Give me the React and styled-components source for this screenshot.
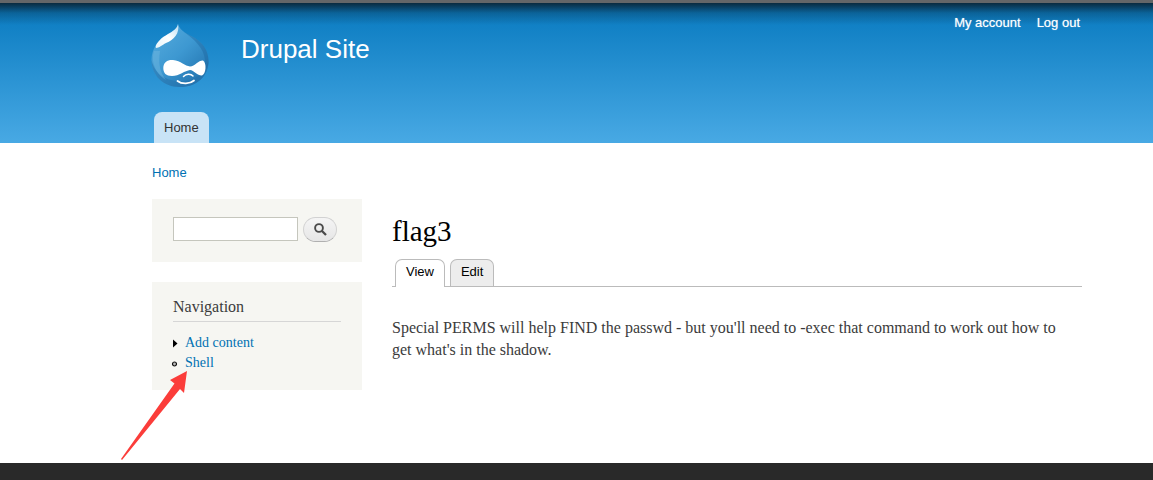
import React from 'react';
import styled, { createGlobalStyle } from 'styled-components';

const sans = '"Liberation Sans", Arial, sans-serif';
const serif = 'Georgia, "Liberation Serif", serif';

const GlobalStyle = createGlobalStyle`
  * { box-sizing: border-box; }
  body {
    margin: 0;
    background: #fff;
    color: #3b3b3b;
    font-family: ${serif};
  }
  a { color: #0071b3; text-decoration: none; }
  h1, h2, p, ul { margin: 0; padding: 0; font-weight: normal; }
`;

const Page = styled.div`
  min-height: 100vh;
  display: flex;
  flex-direction: column;
`;

const Header = styled.header`
  height: 143px;
  padding: 0 71px 0 152px;
  border-top: 3px solid #646668;
  background:
    linear-gradient(rgba(10, 28, 40, 0.85), rgba(10, 40, 60, 0.3) 10px, rgba(10, 60, 100, 0) 22px),
    linear-gradient(#0779bf, #48a9e4);
  display: flex;
  flex-direction: column;
  justify-content: space-between;
  font-family: ${sans};
`;

const Branding = styled.div`
  display: flex;
  align-items: flex-start;
`;

const Logo = styled.a`
  margin: 20px 32px 0 -1px;
  line-height: 0;
`;

const SiteName = styled.a`
  flex: 1;
  margin-top: 31px;
  font-size: 26px;
  line-height: 30px;
  color: #fff;
`;

const UserMenu = styled.nav`
  display: flex;
  gap: 16px;
  padding: 12px 2px 0 0;
  a {
    color: #fff;
    font-size: 13px;
    line-height: 16px;
    text-shadow: 0 0 1px rgba(255, 255, 255, 0.6);
  }
`;

const MenuTab = styled.a`
  align-self: flex-start;
  margin-left: 2px;
  padding: 0 10px;
  border-radius: 8px 8px 0 0;
  background: #c8e3f6;
  color: #333;
  font-size: 13px;
  line-height: 31px;
`;

const Body = styled.div`
  flex: 1;
  padding: 20px 71px 72px 152px;
`;

const Breadcrumb = styled.nav`
  font-family: ${sans};
  font-size: 13px;
  line-height: 20px;
`;

const Columns = styled.div`
  display: flex;
  align-items: flex-start;
  gap: 30px;
  padding-top: 16px;
`;

const Sidebar = styled.aside`
  flex: 0 0 210px;
  display: flex;
  flex-direction: column;
  gap: 20px;
`;

const Block = styled.section`
  padding: ${(p) => (p.$compact ? '18px 21px 20px' : '14px 21px 17px')};
  background: #f6f6f2;
`;

const SearchForm = styled.form`
  display: flex;
  align-items: flex-start;
  gap: 5px;
`;

const SearchInput = styled.input`
  width: 125px;
  height: 24px;
  padding: 2px 4px;
  border: 1px solid #c5c6bd;
  background: #fff;
  font: 13px ${sans};
`;

const SearchButton = styled.button`
  width: 34px;
  height: 25px;
  padding: 0;
  display: flex;
  align-items: center;
  justify-content: center;
  border: 1px solid #d2d2d2;
  border-bottom-color: #b0b0b0;
  border-radius: 13px;
  background: linear-gradient(#f5f5f5, #e6e6e6);
`;

const BlockTitle = styled.h2`
  padding-bottom: 3px;
  border-bottom: 1px solid #d6d6d6;
  color: #3b3b3b;
  font-size: 16px;
  line-height: 22px;
`;

const NavList = styled.ul`
  list-style: none;
  padding-top: 11px;
`;

const NavItem = styled.li`
  position: relative;
  display: flex;
  align-items: center;
  gap: 7px;
  font-size: 14px;
  line-height: 20px;
`;

const Pointer = styled.svg`
  position: absolute;
  left: -53px;
  top: 18px;
  pointer-events: none;
`;

const Main = styled.main`
  flex: 1;
  min-width: 0;
  padding-top: 15px;
`;

const Title = styled.h1`
  color: #000;
  font-size: 29px;
  line-height: 34px;
`;

const Tabs = styled.nav`
  display: flex;
  gap: 5px;
  margin-top: 11px;
  padding-left: 3px;
  border-bottom: 1px solid #bbb;
`;

const Tab = styled.a`
  padding: 0 10px 3px;
  margin-bottom: ${(p) => (p.$active ? '-1px' : '0')};
  border: 1px solid #bbb;
  border-bottom: 0;
  border-radius: 7px 7px 0 0;
  background: ${(p) => (p.$active ? '#fff' : '#ededed')};
  color: #000;
  font-family: ${sans};
  font-size: 13px;
  line-height: 23px;
`;

const Article = styled.p`
  padding: 30px 12px 0 0;
  font-size: 16px;
  line-height: 22px;
`;

const Footer = styled.footer`
  height: 17px;
  background: #292929;
`;

const Druplicon = () => (
  <svg width="58" height="65" viewBox="0 0 58 65" aria-hidden="true">
    <defs>
      <linearGradient id="drop" x1="0" y1="0.1" x2="0.8" y2="1">
        <stop offset="0" stopColor="#56abdd" />
        <stop offset="0.5" stopColor="#3d98d1" />
        <stop offset="1" stopColor="#2273af" />
      </linearGradient>
      <linearGradient id="shine" x1="1" y1="0" x2="0" y2="1">
        <stop offset="0" stopColor="#b9def3" />
        <stop offset="0.5" stopColor="#fff" />
        <stop offset="1" stopColor="#e6f4fb" />
      </linearGradient>
    </defs>
    <path d="M27 1C28 6 34 10 40 13C51 18 57.5 27 57.5 38C57.5 54 45 64 29 64C13 64 .5 53 .5 37C.5 26 7 17 16 12C22 9 26 6 27 1Z" fill="url(#drop)" />
    <path d="M.5 37C3 49 13 58 28 58C43 59 53 51 57.5 38C57.5 54 45 64 29 64C13 64 .5 53 .5 37Z" fill="#216fa9" opacity="0.5" />
    <path d="M3 28C-1 40 6 52 15 57C9 49 7 41 9 28Z" fill="#79bbe2" opacity="0.4" />
    <path d="M33 9C43 16 53 25 54 37C54 42 54 45 52 49C56 46 57.5 42 57.5 38C57.5 27 51 18 40 13Z" fill="#1c68a1" opacity="0.45" />
    <path d="M27 1C29 10 23 17 15 20C11 22 8 25 5 25C4 23 6 20 8 18C11 14 14 13 17 11C22 8 26 6 27 1Z" fill="url(#shine)" />
    <path d="M12.3 45C12.3 39 17 36.5 22 37C30 38 34 43 39 43.5C44 43 48 37 52 37.5C56 40 55 51 51 52.5C47 53 43 47.5 39 47C34 47.5 28 53 21 53C15 53 12.3 50 12.3 45Z" fill="#fff" />
    <path d="M32.5 53.5C35 50.5 40 50.5 42 53" fill="none" stroke="#fff" strokeWidth="1.5" strokeLinecap="round" />
    <path d="M26.5 58C31 61.5 39 61 43 57.5" fill="none" stroke="#fff" strokeWidth="1.8" strokeLinecap="round" />
  </svg>
);

const SearchIcon = () => (
  <svg width="13" height="13" viewBox="0 0 13 13" fill="none" stroke="#4a4a4a" aria-hidden="true">
    <circle cx="5" cy="5" r="3.9" strokeWidth="1.9" />
    <path d="M8 8L12 12" strokeWidth="2.3" />
  </svg>
);

const CollapsedMark = () => (
  <svg width="5" height="8" viewBox="0 0 5 8" overflow="visible" aria-hidden="true">
    <path d="M0 0.5L4.5 4.5L0 8.5Z" fill="#000" />
  </svg>
);

const LeafMark = () => (
  <svg width="5" height="6" viewBox="0 0 5 6" overflow="visible" aria-hidden="true">
    <circle cx="1.5" cy="4" r="2" fill="#bbb" stroke="#111" strokeWidth="1.2" />
  </svg>
);

export default function App() {
  return (
    <Page>
      <GlobalStyle />
      <Header>
        <Branding>
          <Logo href="#" aria-label="Drupal Site home"><Druplicon /></Logo>
          <SiteName href="#">Drupal Site</SiteName>
          <UserMenu>
            <a href="#">My account</a>
            <a href="#">Log out</a>
          </UserMenu>
        </Branding>
        <MenuTab href="#">Home</MenuTab>
      </Header>
      <Body>
        <Breadcrumb><a href="#">Home</a></Breadcrumb>
        <Columns>
          <Sidebar>
            <Block $compact>
              <SearchForm role="search">
                <SearchInput type="text" aria-label="Search" />
                <SearchButton type="button" aria-label="Search"><SearchIcon /></SearchButton>
              </SearchForm>
            </Block>
            <Block>
              <BlockTitle>Navigation</BlockTitle>
              <NavList>
                <NavItem><CollapsedMark /><a href="#">Add content</a></NavItem>
                <NavItem>
                  <LeafMark /><a href="#">Shell</a>
                  <Pointer width="68" height="90" viewBox="0 0 68 90" aria-hidden="true">
                    <path d="M67 0L50 9L54.5 12.5L1 88L2 89L60 18L64 22Z" fill="#fb3d3a" />
                  </Pointer>
                </NavItem>
              </NavList>
            </Block>
          </Sidebar>
          <Main>
            <Title>flag3</Title>
            <Tabs>
              <Tab href="#" $active>View</Tab>
              <Tab href="#">Edit</Tab>
            </Tabs>
            <Article>
              Special PERMS will help FIND the passwd - but you'll need to -exec that command to work out how to get what's in the shadow.
            </Article>
          </Main>
        </Columns>
      </Body>
      <Footer />
    </Page>
  );
}
